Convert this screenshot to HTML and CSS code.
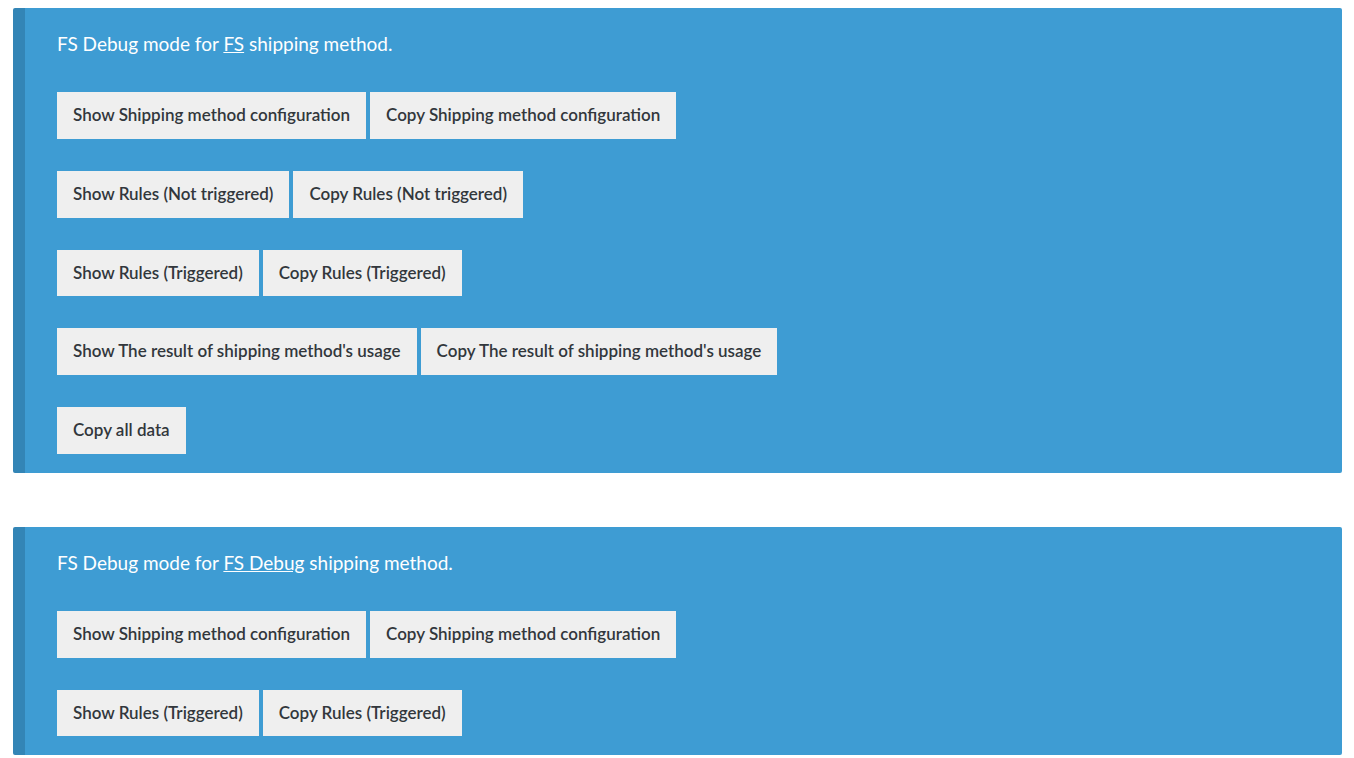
FILE: index.html
```html
<!DOCTYPE html>
<html lang="en">

<head>
  <meta charset="UTF-8">
  <meta name="viewport" content="width=device-width, initial-scale=1.0">
  <title>FS Debug</title>
  <link rel="stylesheet" href="styles.css">
</head>

<body>
  <div class="notice">
    <p class="notice-title">FS Debug mode for <a href="#">FS</a> shipping method.</p>
    <div class="btn-row">
      <button class="debug-btn">Show Shipping method configuration</button>
      <button class="debug-btn">Copy Shipping method configuration</button>
    </div>
    <div class="btn-row">
      <button class="debug-btn">Show Rules (Not triggered)</button>
      <button class="debug-btn">Copy Rules (Not triggered)</button>
    </div>
    <div class="btn-row">
      <button class="debug-btn">Show Rules (Triggered)</button>
      <button class="debug-btn">Copy Rules (Triggered)</button>
    </div>
    <div class="btn-row">
      <button class="debug-btn">Show The result of shipping method's usage</button>
      <button class="debug-btn">Copy The result of shipping method's usage</button>
    </div>
    <div class="btn-row">
      <button class="debug-btn">Copy all data</button>
    </div>
  </div>

  <div class="notice">
    <p class="notice-title">FS Debug mode for <a href="#">FS Debug</a> shipping method.</p>
    <div class="btn-row">
      <button class="debug-btn">Show Shipping method configuration</button>
      <button class="debug-btn">Copy Shipping method configuration</button>
    </div>
    <div class="btn-row">
      <button class="debug-btn">Show Rules (Triggered)</button>
      <button class="debug-btn">Copy Rules (Triggered)</button>
    </div>
  </div>
</body>

</html>
```

FILE: styles.css
```css
* {
  margin: 0;
  padding: 0;
  box-sizing: border-box;
}

body {
  font-family: "Source Sans Pro", Lato, "Liberation Sans", sans-serif;
  background-color: #fff;
  padding: 8px 12px 0 13px;
}

.notice {
  background-color: #3e9cd3;
  border-left: 12px solid #3385b6;
  border-radius: 2px;
  padding: 24px 32px 19px 32px;
  margin-bottom: 54px;
}

.notice-title {
  color: #fff;
  font-size: 19px;
  line-height: 24px;
  margin-bottom: 36px;
}

.notice-title a {
  color: #fff;
}

.btn-row {
  display: flex;
  gap: 4px;
  margin-bottom: 32px;
}

.btn-row:last-child {
  margin-bottom: 0;
}

.debug-btn {
  font-family: inherit;
  font-size: 17px;
  font-weight: 600;
  line-height: 22.75px;
  padding: 12px 16px;
  background-color: #efefef;
  color: #32373c;
  border: none;
  cursor: pointer;
}
```
